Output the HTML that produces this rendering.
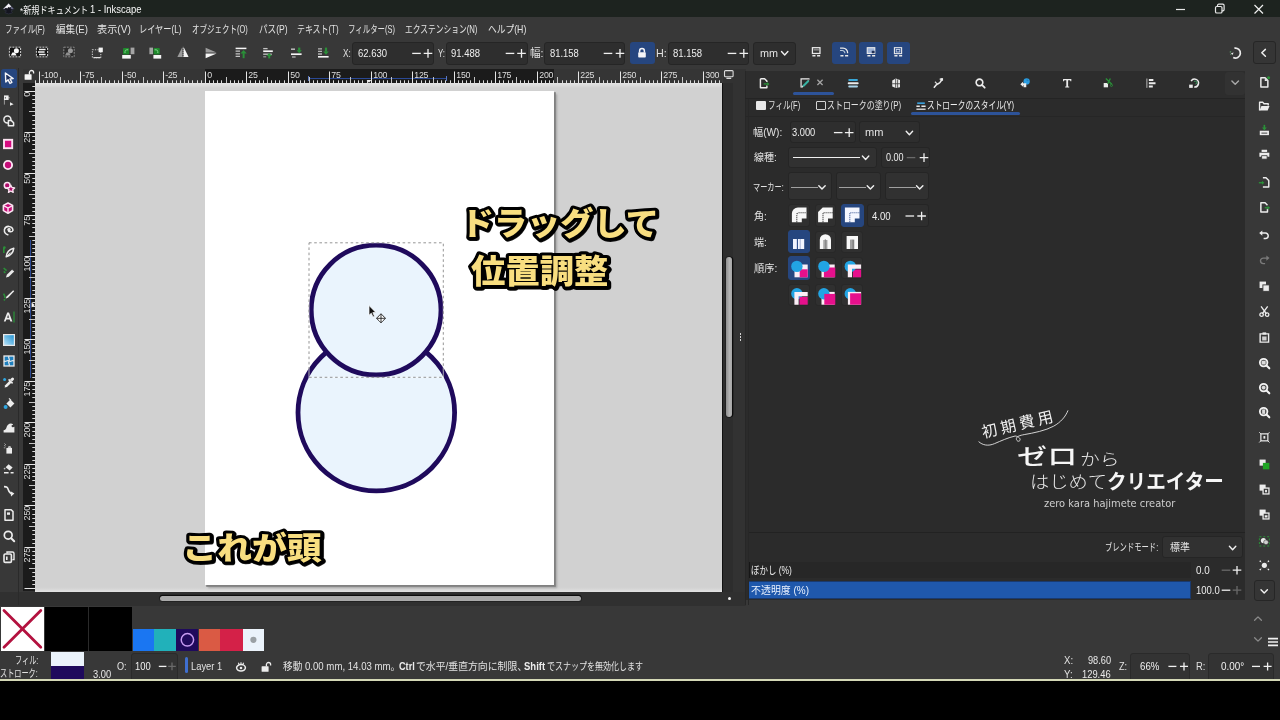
<!DOCTYPE html>
<html lang="ja"><head><meta charset="utf-8"><title>*新規ドキュメント 1 - Inkscape</title>
<style>
*{box-sizing:border-box;margin:0;padding:0}
html,body{width:1280px;height:720px;overflow:hidden;background:#000}
body{font-family:"Liberation Sans","Noto Sans CJK JP",sans-serif;font-size:10.5px;color:#e4e4e4;position:relative;line-height:1}
#root{position:absolute;left:0;top:0;width:1280px;height:720px;will-change:transform;filter:blur(0.6px)}
.a{position:absolute}
.t{position:absolute;white-space:nowrap;transform-origin:0 0}
svg{overflow:visible}

.box{position:absolute;background:#2d2d2d;border:1px solid #232323;border-radius:3px}
.btn{position:absolute;border-radius:3px}
.blue{background:#26467f}
</style></head>
<body>
<div id="root">
<div class="a" style="left:-20px;top:-20px;width:1320px;height:36.8px;background:#1d231f;"></div>
<div class="a" style="left:-20px;top:16.8px;width:1320px;height:664px;background:#383838;"></div>
<div class="a" style="left:0px;top:679.5px;width:1280px;height:2px;background:#d8dcb8;"></div>
<div class="a" style="left:0px;top:681.5px;width:1280px;height:39px;background:#000;"></div>
<span class="t" style="left:19.60px;top:4.00px;transform:scale(0.7389,0.9000);font-size:11px;line-height:15px;height:15px;color:#f6f6f6;">*新規ドキュメント</span>
<span class="t" style="left:89.94px;top:2.41px;transform:scale(0.8610,1.0300);font-size:11px;line-height:15px;height:15px;color:#f6f6f6;">1 - Inkscape</span>
<svg class="a" style="left:1170px;top:0px;" width="100" height="18" viewBox="0 0 100 18"><path d="M6 9.5h9" stroke="#e8e8e8" stroke-width="1.2" fill="none"/><rect x="45.5" y="6.5" width="6.5" height="6.5" rx="1.3" stroke="#e8e8e8" stroke-width="1.2" fill="none"/><path d="M47.5 6.5v-1a1.3 1.3 0 0 1 1.3-1.3h4a1.3 1.3 0 0 1 1.3 1.3v4a1.3 1.3 0 0 1-1.3 1.3h-1" stroke="#e8e8e8" stroke-width="1.2" fill="none"/><path d="M84.5 5l8.5 8.5M93 5l-8.5 8.5" stroke="#f0f0f0" stroke-width="1.2" fill="none"/></svg>
<svg class="a" style="left:2.6px;top:2.6px;" width="12" height="12" viewBox="0 0 12 12"><path d="M5.600 0.400 L10.800 5.600 Q11.300 6.400 10.300 6.800 L8.200 7.600 Q7.600 8 8.300 8.500 L9.200 9.100 Q9.600 9.700 8.800 10 L5.600 10.900 L2.600 10 Q1.800 9.700 2.200 9.100 L3.300 8.300 Q3.700 7.800 3 7.500 L0.900 6.800 Q-0.100 6.400 0.400 5.600 Z" fill="#14151f" stroke="#3a3d52" stroke-width="0.500"/><path d="M5.600 0.500 L8.400 3.400 L6.600 4.600 L5.400 4 L4.200 5.400 L3 4.800 L0.900 6 Q0.300 6 0.600 5.400 Z" fill="#f2f2f6"/><path d="M8.400 3.400 L10.600 5.600 L9 6.400 L7.400 5 Z" fill="#6a6c84"/></svg>
<span class="t" style="left:4.88px;top:22.30px;transform:scaleX(0.7185);font-size:10.5px;line-height:15px;height:15px;color:#e2e2e2;">ファイル(F)</span>
<span class="t" style="left:56.00px;top:22.30px;transform:scaleX(0.9118);font-size:10.5px;line-height:15px;height:15px;color:#e2e2e2;">編集(E)</span>
<span class="t" style="left:97.03px;top:22.30px;transform:scaleX(0.9697);font-size:10.5px;line-height:15px;height:15px;color:#e2e2e2;">表示(V)</span>
<span class="t" style="left:139.44px;top:22.30px;transform:scaleX(0.7788);font-size:10.5px;line-height:15px;height:15px;color:#e2e2e2;">レイヤー(L)</span>
<span class="t" style="left:192.29px;top:22.30px;transform:scaleX(0.7143);font-size:10.5px;line-height:15px;height:15px;color:#e2e2e2;">オブジェクト(O)</span>
<span class="t" style="left:258.68px;top:22.30px;transform:scaleX(0.8182);font-size:10.5px;line-height:15px;height:15px;color:#e2e2e2;">パス(P)</span>
<span class="t" style="left:296.75px;top:22.30px;transform:scaleX(0.7547);font-size:10.5px;line-height:15px;height:15px;color:#e2e2e2;">テキスト(T)</span>
<span class="t" style="left:348.29px;top:22.30px;transform:scaleX(0.7077);font-size:10.5px;line-height:15px;height:15px;color:#e2e2e2;">フィルター(S)</span>
<span class="t" style="left:405.26px;top:22.30px;transform:scaleX(0.7371);font-size:10.5px;line-height:15px;height:15px;color:#e2e2e2;">エクステンション(N)</span>
<span class="t" style="left:488.17px;top:22.30px;transform:scaleX(0.8318);font-size:10.5px;line-height:15px;height:15px;color:#e2e2e2;">ヘルプ(H)</span>
<div class="a" id="canvas" style="left:35px;top:83px;width:687px;height:508.5px;background:#d1d1d1;overflow:hidden"><div class="a" style="left:0;top:0;width:687px;height:5px;background:linear-gradient(#e4e4e4,#d9d9d9 60%,#d1d1d1)"></div><div class="a" style="left:0;bottom:0;width:687px;height:5px;background:linear-gradient(#d1d1d1,#d6d6d6 40%,#e2e2e2)"></div><div class="a" style="left:170.3px;top:8px;width:348.4px;height:494px;background:#fff;box-shadow:1.5px 1.5px 0 0.3px #808080,2.5px 2.5px 2px 0 rgba(120,120,120,.5)"></div></div>
<div class="a" style="left:722px;top:83px;width:1px;height:509px;background:#111;"></div>
<svg class="a" style="left:0;top:0" width="1280" height="720" viewBox="0 0 1280 720"><circle cx="376.3" cy="412.6" r="78.3" fill="#eaf4fd" stroke="#1f0a5c" stroke-width="4.8"/><circle cx="376.1" cy="310.1" r="64.9" fill="#eaf4fd" stroke="#1f0a5c" stroke-width="4.8"/><rect x="309" y="242.8" width="134.3" height="134.5" fill="none" stroke="#fff" stroke-width="1" opacity=".65"/><rect x="309" y="242.8" width="134.3" height="134.5" fill="none" stroke="#7a7a7a" stroke-width="0.8" stroke-dasharray="2.6 2.6"/><path d="M369 305.5 L369 315.2 L371.3 313.2 L373 317 L374.5 316.3 L372.8 312.6 L375.8 312.4 Z" fill="#111" stroke="#fff" stroke-width="0.7"/><g transform="translate(381 318.3)" stroke="#222" stroke-width="0.9" fill="#fff"><path d="M0 -4.6 L2 -2.4 L4.6 0 L2 2.4 L0 4.6 L-2 2.4 L-4.6 0 L-2 -2.4 Z"/><path d="M-4.2 0H4.2M0 -4.2V4.2" fill="none"/></g></svg>
<span class="t" style="left:449.42px;top:194.19px;transform:scale(0.9766,0.9310);font-size:34px;line-height:60px;height:60px;color:#f8de80;"><svg width="234" height="60" viewBox="0 0 234 60" style="display:block;filter:drop-shadow(1.2px 1.4px 0.6px #000)"><text x="12" y="44" font-family="'Noto Sans CJK JP','Liberation Sans',sans-serif" font-size="34" font-weight="900" fill="#f8de80" stroke="#000" stroke-width="6.4" stroke-linejoin="round" stroke-linecap="round" paint-order="stroke">ドラッグして</text></svg></span>
<span class="t" style="left:458.91px;top:241.48px;transform:scale(1.0099,0.9561);font-size:34px;line-height:60px;height:60px;color:#f8de80;"><svg width="166" height="60" viewBox="0 0 166 60" style="display:block;filter:drop-shadow(1.2px 1.4px 0.6px #000)"><text x="12" y="44" font-family="'Noto Sans CJK JP','Liberation Sans',sans-serif" font-size="34" font-weight="900" fill="#f8de80" stroke="#000" stroke-width="6.4" stroke-linejoin="round" stroke-linecap="round" paint-order="stroke">位置調整</text></svg></span>
<span class="t" style="left:170.17px;top:518.90px;transform:scale(1.0252,0.9095);font-size:34px;line-height:60px;height:60px;color:#f8de80;"><svg width="166" height="60" viewBox="0 0 166 60" style="display:block;filter:drop-shadow(1.2px 1.4px 0.6px #000)"><text x="12" y="44" font-family="'Noto Sans CJK JP','Liberation Sans',sans-serif" font-size="34" font-weight="900" fill="#f8de80" stroke="#000" stroke-width="6.4" stroke-linejoin="round" stroke-linecap="round" paint-order="stroke">これが頭</text></svg></span>
<div class="a" style="left:745px;top:71px;width:500px;height:528.5px;background:#2b2b2b;"></div>
<div class="a" style="left:745px;top:71px;width:500px;height:26.5px;background:#2d2d2d;"></div>
<div class="a" style="left:722.5px;top:69px;width:23px;height:537px;background:#323232;"></div>
<div class="a" style="left:723px;top:83px;width:10.4px;height:509px;background:#2d2d2d;"></div>
<div class="a" style="left:726.4px;top:256.5px;width:5.6px;height:160.5px;background:linear-gradient(90deg,#8f8f8f,#b4b4b4 60%,#a4a4a4);border-radius:3px;box-shadow:1px 0 0 0.3px #0c0c0c,0 0 0 1px #222"></div>
<div class="a" style="left:745.2px;top:71px;width:1px;height:534px;background:#272727;"></div>
<div class="a" style="left:748.2px;top:98px;width:1px;height:507px;background:#272727;"></div>
<div class="a" style="left:739.9px;top:333.2px;width:1.4px;height:1.4px;background:#d0d0d0;"></div>
<div class="a" style="left:739.9px;top:336.2px;width:1.4px;height:1.4px;background:#d0d0d0;"></div>
<div class="a" style="left:739.9px;top:339.2px;width:1.4px;height:1.4px;background:#d0d0d0;"></div>
<div class="a" style="left:0px;top:591.5px;width:745px;height:14.5px;background:#303030;"></div>
<div class="a" style="left:160px;top:596px;width:421px;height:5.4px;background:#a9a9a9;border-radius:3px;box-shadow:0 -1px 0 0.3px #0c0c0c,0 0 0 1px #222"></div>
<div class="a" style="left:727.8px;top:597.3px;width:3px;height:3px;background:#f4f4f4;border-radius:50%"></div>
<span class="t" style="left:343.30px;top:45.90px;transform:scaleX(0.7667);font-size:10.8px;line-height:15px;height:15px;color:#e2e2e2;">X:</span>
<div class="a" style="left:352px;top:41.5px;width:82px;height:23.0px;background:#2e2e2e;border:1px solid #252525;border-radius:3px"></div>
<span class="t" style="left:357.50px;top:45.90px;transform:scaleX(0.8788);font-size:10.8px;line-height:15px;height:15px;color:#efefef;">62.630</span>
<svg class="a" style="left:0px;top:0px;" width="1" height="1" viewBox="0 0 1 1"><path d="M412.2 53.4h8.6" stroke="#f0f0f0" stroke-width="1.3" fill="none"/><path d="M423.7 53.4h8.6M428 49.1v8.6" stroke="#f0f0f0" stroke-width="1.3" fill="none"/></svg>
<span class="t" style="left:437.80px;top:45.90px;transform:scaleX(0.7222);font-size:10.8px;line-height:15px;height:15px;color:#e2e2e2;">Y:</span>
<div class="a" style="left:446px;top:41.5px;width:81.5px;height:23.0px;background:#2e2e2e;border:1px solid #252525;border-radius:3px"></div>
<span class="t" style="left:450.80px;top:45.90px;transform:scaleX(0.8788);font-size:10.8px;line-height:15px;height:15px;color:#efefef;">91.488</span>
<svg class="a" style="left:0px;top:0px;" width="1" height="1" viewBox="0 0 1 1"><path d="M505.7 53.4h8.6" stroke="#f0f0f0" stroke-width="1.3" fill="none"/><path d="M517.2 53.4h8.6M521.5 49.1v8.6" stroke="#f0f0f0" stroke-width="1.3" fill="none"/></svg>
<span class="t" style="left:529.82px;top:45.90px;transform:scaleX(0.9833);font-size:10.8px;line-height:15px;height:15px;color:#e2e2e2;">幅:</span>
<div class="a" style="left:544px;top:41.5px;width:81px;height:23.0px;background:#2e2e2e;border:1px solid #252525;border-radius:3px"></div>
<span class="t" style="left:549.50px;top:45.90px;transform:scaleX(0.8727);font-size:10.8px;line-height:15px;height:15px;color:#efefef;">81.158</span>
<svg class="a" style="left:0px;top:0px;" width="1" height="1" viewBox="0 0 1 1"><path d="M603.7 53.4h8.6" stroke="#f0f0f0" stroke-width="1.3" fill="none"/><path d="M615.7 53.4h8.6M620 49.1v8.6" stroke="#f0f0f0" stroke-width="1.3" fill="none"/></svg>
<div class="btn blue" style="left:630px;top:41.5px;width:25px;height:22.5px"></div><svg class="a" style="left:636px;top:47px;" width="12" height="12" viewBox="0 0 12 12"><path d="M3.6 5.6V3.9a2.4 2.4 0 0 1 4.8 0V5.6" stroke="#f4f4f8" stroke-width="1.5" fill="none"/><rect x="2.2" y="5.2" width="7.6" height="5.4" rx="0.8" fill="#f4f4f8"/></svg>
<span class="t" style="left:656.00px;top:45.90px;font-size:10.8px;line-height:15px;height:15px;color:#e2e2e2;">H:</span>
<div class="a" style="left:668px;top:41.5px;width:81.39999999999998px;height:23.0px;background:#2e2e2e;border:1px solid #252525;border-radius:3px"></div>
<span class="t" style="left:672.50px;top:45.90px;transform:scaleX(0.8818);font-size:10.8px;line-height:15px;height:15px;color:#efefef;">81.158</span>
<svg class="a" style="left:0px;top:0px;" width="1" height="1" viewBox="0 0 1 1"><path d="M727.7 53.4h8.6" stroke="#f0f0f0" stroke-width="1.3" fill="none"/><path d="M739.5 53.4h8.6M743.8 49.1v8.6" stroke="#f0f0f0" stroke-width="1.3" fill="none"/></svg>
<div class="a" style="left:752.5px;top:41.5px;width:43.5px;height:23.0px;background:#2e2e2e;border:1px solid #252525;border-radius:3px"></div>
<span class="t" style="left:760.00px;top:45.90px;font-size:10.8px;line-height:15px;height:15px;color:#e2e2e2;">mm</span>
<svg class="a" style="left:0px;top:0px;" width="1" height="1" viewBox="0 0 1 1"><path d="M781.5 51.5l3.2 3.4l3.2 -3.4" stroke="#f0f0f0" stroke-width="1.4" fill="none" stroke-linecap="round" stroke-linejoin="round"/></svg>
<svg class="a" style="left:6.60px;top:44.00px;" width="16.00" height="16.00" viewBox="-8 -8 16 16"><rect x="-5.6" y="-4.8" width="11.2" height="9.6" fill="#141414" stroke="#d0d0d0" stroke-width="1" stroke-dasharray="2 1"/><circle cx="1.4" cy="-1.2" r="2.5" fill="#fafafa"/><path d="M-4.2 3.6l1.600-3h2.600l1.600 3z" fill="#fafafa"/></svg>
<svg class="a" style="left:33.60px;top:44.00px;" width="16.00" height="16.00" viewBox="-8 -8 16 16"><rect x="-5.6" y="-4.8" width="11.2" height="9.6" fill="#141414" stroke="#d0d0d0" stroke-width="1" stroke-dasharray="2 1"/><path d="M-3 -2.4h6.6M-4 0h6.600M-3 2.4h6.6" stroke="#f4f4f4" stroke-width="1.5"/></svg>
<svg class="a" style="left:61.00px;top:44.00px;" width="16.00" height="16.00" viewBox="-8 -8 16 16"><rect x="-5.2" y="-4.8" width="10.4" height="9.6" fill="#2c2c2c" stroke="#8a8a8a" stroke-width="1" stroke-dasharray="2 1"/><circle cx="1.400" cy="-1.200" r="2.500" fill="#9a9a9a"/><path d="M-4 3.600l1.600-3h2.600l1.600 3z" fill="#8f8f8f"/></svg>
<svg class="a" style="left:89.00px;top:44.60px;" width="16.00" height="16.00" viewBox="-8 -8 16 16"><rect x="-4.600" y="-3.200" width="8.400" height="8" fill="none" stroke="#c8c8c8" stroke-width="1.100" stroke-dasharray="1.300 1.200"/><rect x="1.600" y="-5.400" width="4.200" height="4.600" fill="#f4f4f4"/><path d="M-3.400 4.600h7" stroke="#e0e0e0" stroke-width="1.200"/></svg>
<svg class="a" style="left:119.60px;top:44.60px;" width="16.00" height="16.00" viewBox="-8 -8 16 16"><rect x="-5.800" y="2" width="8.600" height="3.600" fill="#f6f6f6"/><rect x="2.600" y="-5.400" width="3.800" height="6.600" fill="#a4a4a4"/><rect x="-5" y="-5" width="6.200" height="6.400" rx="1" fill="#1f8a2c"/><path d="M-3 0v-1.400a1.800 1.800 0 0 1 1.800-1.800h1.400" stroke="#7fd08a" stroke-width="1" fill="none"/></svg>
<svg class="a" style="left:147.40px;top:44.60px;" width="16.00" height="16.00" viewBox="-8 -8 16 16"><rect x="-1.600" y="2" width="7.800" height="3.600" fill="#f6f6f6"/><rect x="-5.600" y="-5.400" width="3.600" height="6.600" fill="#a4a4a4"/><rect x="-1.400" y="-5" width="6.200" height="6.400" rx="1" fill="#1f8a2c"/><path d="M2.800 0v-1.400a1.800 1.800 0 0 0-1.800-1.800h-1.400" stroke="#7fd08a" stroke-width="1" fill="none"/></svg>
<svg class="a" style="left:175.00px;top:44.40px;" width="16.00" height="16.00" viewBox="-8 -8 16 16"><path d="M-0.400 -5.400v10.400h-5.200z" fill="#9c9c9c"/><path d="M0.400 -5.400v10.400h5.200z" fill="#f6f6f6"/><path d="M0 -5v10" stroke="#333" stroke-width="0.800" stroke-dasharray="1 1"/></svg>
<svg class="a" style="left:202.60px;top:45.00px;" width="16.00" height="16.00" viewBox="-8 -8 16 16"><path d="M-5.400 -0.400h11l-11 -4.800z" fill="#9c9c9c"/><path d="M-5.400 0.400h11l-11 4.800z" fill="#f6f6f6"/></svg>
<svg class="a" style="left:232.80px;top:44.80px;" width="16.00" height="16.00" viewBox="-8 -8 16 16"><path d="M-5.400 -4.600h10.800" stroke="#f6f6f6" stroke-width="1.500"/><path d="M-5.400 -1.800h4.400M-5.400 0.800h4.400M-5.400 3.400h4.400" stroke="#c4c4c4" stroke-width="1.300"/><path d="M2.600 5.200v-5" stroke="#2a9038" stroke-width="2"/><path d="M-0.600 0.600l3.200-3.600 3.200 3.600z" fill="#2a9038"/></svg>
<svg class="a" style="left:260.40px;top:44.80px;" width="16.00" height="16.00" viewBox="-8 -8 16 16"><path d="M-4.800 -4.400h4.400" stroke="#c4c4c4" stroke-width="1.300"/><path d="M-4.800 -1.800h9.600" stroke="#f6f6f6" stroke-width="1.700"/><path d="M-4.800 1.200h8.600" stroke="#c4c4c4" stroke-width="1.300"/><path d="M1.200 5.400v-3.200" stroke="#2a9038" stroke-width="2"/><path d="M-1.600 3l2.800-3 2.800 3z" fill="#2a9038"/><path d="M-4.800 3.800h3" stroke="#a0a0a0" stroke-width="1.100"/></svg>
<svg class="a" style="left:287.60px;top:44.80px;" width="16.00" height="16.00" viewBox="-8 -8 16 16"><path d="M-5 -3.800h4" stroke="#b4b4b4" stroke-width="1.600"/><path d="M-5 1.200h10.600" stroke="#f6f6f6" stroke-width="1.700"/><path d="M-4 4h3.600" stroke="#b4b4b4" stroke-width="1.300"/><path d="M3.200 -5.400v3" stroke="#2a9038" stroke-width="2.200"/><path d="M0.600 -2.800l2.600 3 2.600-3z" fill="#2a9038"/></svg>
<svg class="a" style="left:315.00px;top:44.80px;" width="16.00" height="16.00" viewBox="-8 -8 16 16"><path d="M-5 3.800h10.600" stroke="#f6f6f6" stroke-width="1.600"/><path d="M-5 -4.200h4M-5 -1.600h4M-5 1h4" stroke="#b4b4b4" stroke-width="1.300"/><path d="M3 -5.400v4" stroke="#2a9038" stroke-width="2.200"/><path d="M0.200 -1.600l2.800 3.400 2.800-3.400z" fill="#2a9038"/></svg>
<svg class="a" style="left:808.80px;top:45.20px;" width="14.40" height="14.40" viewBox="-8 -8 16 16"><rect x="-4.2" y="-5" width="8.4" height="6.4" fill="none" stroke="#ececec" stroke-width="1.4"/><path d="M-3 -2.6h6" stroke="#a9a9a9" stroke-width="1.2"/><path d="M-4.2 4h3.4M1 4h3.4" stroke="#ececec" stroke-width="1.6"/><path d="M-2.6 4h0.1M2.6 4h0.1" stroke="#234" stroke-width="0.8"/></svg>
<div class="btn blue" style="left:832.0px;top:41.5px;width:23.6px;height:22.4px"></div><svg class="a" style="left:836.60px;top:45.20px;" width="14.40" height="14.40" viewBox="-8 -8 16 16"><path d="M-4.6 -4.4h3.4a5 5 0 0 1 5 5v0.6" stroke="#ececec" stroke-width="1.4" fill="none"/><path d="M-4.6 -1.8h2.4a3 3 0 0 1 3 3" stroke="#bcd" stroke-width="1.2" fill="none"/><path d="M-4.2 4h3.4M1 4h3.4" stroke="#ececec" stroke-width="1.6"/><path d="M-2.6 4h0.1M2.6 4h0.1" stroke="#234" stroke-width="0.8"/></svg>
<div class="btn blue" style="left:859.0px;top:41.5px;width:23.6px;height:22.4px"></div><svg class="a" style="left:863.60px;top:45.20px;" width="14.40" height="14.40" viewBox="-8 -8 16 16"><rect x="-4.4" y="-5" width="8.4" height="6.4" fill="#9fb4d8" stroke="#ececec" stroke-width="1.2"/><rect x="0.6" y="-1.6" width="3.2" height="2.8" fill="#1f2f55"/><path d="M-4.2 4h3.4M1 4h3.4" stroke="#ececec" stroke-width="1.6"/><path d="M-2.6 4h0.1M2.6 4h0.1" stroke="#234" stroke-width="0.8"/></svg>
<div class="btn blue" style="left:886.7px;top:41.5px;width:23.6px;height:22.4px"></div><svg class="a" style="left:891.30px;top:45.20px;" width="14.40" height="14.40" viewBox="-8 -8 16 16"><rect x="-4.2" y="-5" width="8" height="6.6" fill="none" stroke="#ececec" stroke-width="1.2"/><rect x="-2.2" y="-3" width="4" height="2.8" fill="none" stroke="#c8d4ec" stroke-width="1"/><path d="M-4.2 4h3.4M1 4h3.4" stroke="#ececec" stroke-width="1.6"/><path d="M-2.6 4h0.1M2.6 4h0.1" stroke="#234" stroke-width="0.8"/></svg>
<svg class="a" style="left:1227.60px;top:44.60px;" width="16.00" height="16.00" viewBox="-8 -8 16 16"><path d="M-1.6 -4.8a5 5 0 1 1-1.2 9.4" stroke="#ececec" stroke-width="1.7" fill="none"/><path d="M-5.4 -1.8a5 5 0 0 0 0.4 3.4" stroke="#5a8a60" stroke-width="1.4" fill="none" stroke-dasharray="1.4 1.2"/><path d="M-5 0.2l2.6-0.8-1.2 2.6z" fill="#ececec"/></svg>
<div class="a" style="left:1252.5px;top:41px;width:23.09999999999991px;height:23px;background:#353535;border:1px solid #262626;border-radius:3px"></div>
<svg class="a" style="left:0px;top:0px;" width="1" height="1" viewBox="0 0 1 1"><path d="M1265.4 49.4l-3.6 3.4 3.6 3.4" stroke="#f0f0f0" stroke-width="1.5" fill="none" stroke-linecap="round" stroke-linejoin="round"/></svg>
<div class="a" style="left:23px;top:69px;width:699px;height:14px;background:#353535;"></div>
<div class="a" style="left:205.3px;top:69px;width:348.453px;height:14px;background:#1b1b1b;"></div>
<div class="a" style="left:23px;top:83px;width:12px;height:508.5px;background:#353535;"></div>
<div class="a" style="left:23px;top:83px;width:12px;height:508px;background:#1b1b1b;"></div>
<div class="a" style="left:18.2px;top:68px;width:1px;height:537px;background:#2a2a2a;"></div>
<div class="a" style="left:307.6px;top:77.5px;width:139.4px;height:1.4px;background:#2a4894;"></div>
<div class="a" style="left:307.6px;top:75.6px;width:1px;height:5px;background:#5a78c0;"></div>
<div class="a" style="left:446px;top:75.6px;width:1px;height:5px;background:#5a78c0;"></div>
<div class="a" style="left:29.8px;top:240.4px;width:1.4px;height:137.6px;background:#2a4894;"></div>
<svg class="a" style="left:0px;top:0px;" width="1" height="1" viewBox="0 0 1 1"><path d="M39.5 71.5v11.5M80.5 71.5v11.5M122.5 71.5v11.5M163.5 71.5v11.5M205.5 71.5v11.5M246.5 71.5v11.5M288.5 71.5v11.5M329.5 71.5v11.5M371.5 71.5v11.5M412.5 71.5v11.5M454.5 71.5v11.5M495.5 71.5v11.5M537.5 71.5v11.5M578.5 71.5v11.5M620.5 71.5v11.5M661.5 71.5v11.5M703.5 71.5v11.5M24.5 91.5h10.5M24.5 132.5h10.5M24.5 173.5h10.5M24.5 215.5h10.5M24.5 256.5h10.5M24.5 298.5h10.5M24.5 339.5h10.5M24.5 381.5h10.5M24.5 422.5h10.5M24.5 464.5h10.5M24.5 505.5h10.5M24.5 547.5h10.5M24.5 588.5h10.5" stroke="#e6e6e6" stroke-width="1" fill="none"/><path d="M60.5 77v6M101.5 77v6M143.5 77v6M184.5 77v6M226.5 77v6M267.5 77v6M309.5 77v6M350.5 77v6M391.5 77v6M433.5 77v6M474.5 77v6M516.5 77v6M557.5 77v6M599.5 77v6M640.5 77v6M682.5 77v6M29 111.5h6M29 153.5h6M29 194.5h6M29 236.5h6M29 277.5h6M29 319.5h6M29 360.5h6M29 402.5h6M29 443.5h6M29 485.5h6M29 526.5h6M29 568.5h6" stroke="#c4c4c4" stroke-width="1" fill="none"/><path d="M35.5 80.3v2.7M43.5 80.3v2.7M47.5 80.3v2.7M51.5 80.3v2.7M55.5 80.3v2.7M64.5 80.3v2.7M68.5 80.3v2.7M72.5 80.3v2.7M76.5 80.3v2.7M85.5 80.3v2.7M89.5 80.3v2.7M93.5 80.3v2.7M97.5 80.3v2.7M105.5 80.3v2.7M109.5 80.3v2.7M114.5 80.3v2.7M118.5 80.3v2.7M126.5 80.3v2.7M130.5 80.3v2.7M134.5 80.3v2.7M138.5 80.3v2.7M147.5 80.3v2.7M151.5 80.3v2.7M155.5 80.3v2.7M159.5 80.3v2.7M167.5 80.3v2.7M172.5 80.3v2.7M176.5 80.3v2.7M180.5 80.3v2.7M188.5 80.3v2.7M192.5 80.3v2.7M197.5 80.3v2.7M201.5 80.3v2.7M209.5 80.3v2.7M213.5 80.3v2.7M217.5 80.3v2.7M221.5 80.3v2.7M230.5 80.3v2.7M234.5 80.3v2.7M238.5 80.3v2.7M242.5 80.3v2.7M250.5 80.3v2.7M255.5 80.3v2.7M259.5 80.3v2.7M263.5 80.3v2.7M271.5 80.3v2.7M275.5 80.3v2.7M279.5 80.3v2.7M284.5 80.3v2.7M292.5 80.3v2.7M296.5 80.3v2.7M300.5 80.3v2.7M304.5 80.3v2.7M313.5 80.3v2.7M317.5 80.3v2.7M321.5 80.3v2.7M325.5 80.3v2.7M333.5 80.3v2.7M338.5 80.3v2.7M342.5 80.3v2.7M346.5 80.3v2.7M354.5 80.3v2.7M358.5 80.3v2.7M362.5 80.3v2.7M367.5 80.3v2.7M375.5 80.3v2.7M379.5 80.3v2.7M383.5 80.3v2.7M387.5 80.3v2.7M396.5 80.3v2.7M400.5 80.3v2.7M404.5 80.3v2.7M408.5 80.3v2.7M416.5 80.3v2.7M421.5 80.3v2.7M425.5 80.3v2.7M429.5 80.3v2.7M437.5 80.3v2.7M441.5 80.3v2.7M445.5 80.3v2.7M450.5 80.3v2.7M458.5 80.3v2.7M462.5 80.3v2.7M466.5 80.3v2.7M470.5 80.3v2.7M479.5 80.3v2.7M483.5 80.3v2.7M487.5 80.3v2.7M491.5 80.3v2.7M499.5 80.3v2.7M503.5 80.3v2.7M508.5 80.3v2.7M512.5 80.3v2.7M520.5 80.3v2.7M524.5 80.3v2.7M528.5 80.3v2.7M533.5 80.3v2.7M541.5 80.3v2.7M545.5 80.3v2.7M549.5 80.3v2.7M553.5 80.3v2.7M562.5 80.3v2.7M566.5 80.3v2.7M570.5 80.3v2.7M574.5 80.3v2.7M582.5 80.3v2.7M586.5 80.3v2.7M591.5 80.3v2.7M595.5 80.3v2.7M603.5 80.3v2.7M607.5 80.3v2.7M611.5 80.3v2.7M615.5 80.3v2.7M624.5 80.3v2.7M628.5 80.3v2.7M632.5 80.3v2.7M636.5 80.3v2.7M645.5 80.3v2.7M649.5 80.3v2.7M653.5 80.3v2.7M657.5 80.3v2.7M665.5 80.3v2.7M669.5 80.3v2.7M674.5 80.3v2.7M678.5 80.3v2.7M686.5 80.3v2.7M690.5 80.3v2.7M694.5 80.3v2.7M698.5 80.3v2.7M707.5 80.3v2.7M711.5 80.3v2.7M715.5 80.3v2.7M719.5 80.3v2.7M32.3 86.5h2.7M32.3 95.5h2.7M32.3 99.5h2.7M32.3 103.5h2.7M32.3 107.5h2.7M32.3 115.5h2.7M32.3 120.5h2.7M32.3 124.5h2.7M32.3 128.5h2.7M32.3 136.5h2.7M32.3 140.5h2.7M32.3 144.5h2.7M32.3 149.5h2.7M32.3 157.5h2.7M32.3 161.5h2.7M32.3 165.5h2.7M32.3 169.5h2.7M32.3 178.5h2.7M32.3 182.5h2.7M32.3 186.5h2.7M32.3 190.5h2.7M32.3 198.5h2.7M32.3 203.5h2.7M32.3 207.5h2.7M32.3 211.5h2.7M32.3 219.5h2.7M32.3 223.5h2.7M32.3 227.5h2.7M32.3 232.5h2.7M32.3 240.5h2.7M32.3 244.5h2.7M32.3 248.5h2.7M32.3 252.5h2.7M32.3 261.5h2.7M32.3 265.5h2.7M32.3 269.5h2.7M32.3 273.5h2.7M32.3 281.5h2.7M32.3 285.5h2.7M32.3 290.5h2.7M32.3 294.5h2.7M32.3 302.5h2.7M32.3 306.5h2.7M32.3 310.5h2.7M32.3 315.5h2.7M32.3 323.5h2.7M32.3 327.5h2.7M32.3 331.5h2.7M32.3 335.5h2.7M32.3 344.5h2.7M32.3 348.5h2.7M32.3 352.5h2.7M32.3 356.5h2.7M32.3 364.5h2.7M32.3 368.5h2.7M32.3 373.5h2.7M32.3 377.5h2.7M32.3 385.5h2.7M32.3 389.5h2.7M32.3 393.5h2.7M32.3 397.5h2.7M32.3 406.5h2.7M32.3 410.5h2.7M32.3 414.5h2.7M32.3 418.5h2.7M32.3 427.5h2.7M32.3 431.5h2.7M32.3 435.5h2.7M32.3 439.5h2.7M32.3 447.5h2.7M32.3 451.5h2.7M32.3 456.5h2.7M32.3 460.5h2.7M32.3 468.5h2.7M32.3 472.5h2.7M32.3 476.5h2.7M32.3 480.5h2.7M32.3 489.5h2.7M32.3 493.5h2.7M32.3 497.5h2.7M32.3 501.5h2.7M32.3 509.5h2.7M32.3 514.5h2.7M32.3 518.5h2.7M32.3 522.5h2.7M32.3 530.5h2.7M32.3 534.5h2.7M32.3 539.5h2.7M32.3 543.5h2.7M32.3 551.5h2.7M32.3 555.5h2.7M32.3 559.5h2.7M32.3 563.5h2.7M32.3 572.5h2.7M32.3 576.5h2.7M32.3 580.5h2.7M32.3 584.5h2.7" stroke="#dcdcdc" stroke-width="1" fill="none"/><path d="M366.6 80l2.4 2.8 2.4-2.8z" fill="#f0f0f0"/><path d="M31.600 302.400l3.200 2.600-3.200 2.600z" fill="#f4f4f4"/></svg>
<span class="t" style="left:41.20px;top:70.40px;font-size:8.8px;line-height:10px;height:10px;color:#dedede;letter-spacing:-0.2px;">-100</span>
<span class="t" style="left:82.20px;top:70.40px;font-size:8.8px;line-height:10px;height:10px;color:#dedede;letter-spacing:-0.2px;">-75</span>
<span class="t" style="left:124.20px;top:70.40px;font-size:8.8px;line-height:10px;height:10px;color:#dedede;letter-spacing:-0.2px;">-50</span>
<span class="t" style="left:165.20px;top:70.40px;font-size:8.8px;line-height:10px;height:10px;color:#dedede;letter-spacing:-0.2px;">-25</span>
<span class="t" style="left:207.20px;top:70.40px;font-size:8.8px;line-height:10px;height:10px;color:#dedede;letter-spacing:-0.2px;">0</span>
<span class="t" style="left:248.20px;top:70.40px;font-size:8.8px;line-height:10px;height:10px;color:#dedede;letter-spacing:-0.2px;">25</span>
<span class="t" style="left:290.20px;top:70.40px;font-size:8.8px;line-height:10px;height:10px;color:#dedede;letter-spacing:-0.2px;">50</span>
<span class="t" style="left:331.20px;top:70.40px;font-size:8.8px;line-height:10px;height:10px;color:#dedede;letter-spacing:-0.2px;">75</span>
<span class="t" style="left:373.20px;top:70.40px;font-size:8.8px;line-height:10px;height:10px;color:#dedede;letter-spacing:-0.2px;">100</span>
<span class="t" style="left:414.20px;top:70.40px;font-size:8.8px;line-height:10px;height:10px;color:#dedede;letter-spacing:-0.2px;">125</span>
<span class="t" style="left:456.20px;top:70.40px;font-size:8.8px;line-height:10px;height:10px;color:#dedede;letter-spacing:-0.2px;">150</span>
<span class="t" style="left:497.20px;top:70.40px;font-size:8.8px;line-height:10px;height:10px;color:#dedede;letter-spacing:-0.2px;">175</span>
<span class="t" style="left:539.20px;top:70.40px;font-size:8.8px;line-height:10px;height:10px;color:#dedede;letter-spacing:-0.2px;">200</span>
<span class="t" style="left:580.20px;top:70.40px;font-size:8.8px;line-height:10px;height:10px;color:#dedede;letter-spacing:-0.2px;">225</span>
<span class="t" style="left:622.20px;top:70.40px;font-size:8.8px;line-height:10px;height:10px;color:#dedede;letter-spacing:-0.2px;">250</span>
<span class="t" style="left:663.20px;top:70.40px;font-size:8.8px;line-height:10px;height:10px;color:#dedede;letter-spacing:-0.2px;">275</span>
<span class="t" style="left:705.20px;top:70.40px;font-size:8.8px;line-height:10px;height:10px;color:#dedede;letter-spacing:-0.2px;">300</span>
<span class="a" style="left:22.4px;top:91.7px;height:10px;white-space:nowrap;font-size:9px;line-height:10px;color:#dedede;letter-spacing:-0.2px;transform-origin:0 0;transform:rotate(-90deg) translate(-100%,0)">0</span>
<span class="a" style="left:22.4px;top:132.7px;height:10px;white-space:nowrap;font-size:9px;line-height:10px;color:#dedede;letter-spacing:-0.2px;transform-origin:0 0;transform:rotate(-90deg) translate(-100%,0)">25</span>
<span class="a" style="left:22.4px;top:173.7px;height:10px;white-space:nowrap;font-size:9px;line-height:10px;color:#dedede;letter-spacing:-0.2px;transform-origin:0 0;transform:rotate(-90deg) translate(-100%,0)">50</span>
<span class="a" style="left:22.4px;top:215.7px;height:10px;white-space:nowrap;font-size:9px;line-height:10px;color:#dedede;letter-spacing:-0.2px;transform-origin:0 0;transform:rotate(-90deg) translate(-100%,0)">75</span>
<span class="a" style="left:22.4px;top:256.7px;height:10px;white-space:nowrap;font-size:9px;line-height:10px;color:#dedede;letter-spacing:-0.2px;transform-origin:0 0;transform:rotate(-90deg) translate(-100%,0)">100</span>
<span class="a" style="left:22.4px;top:298.7px;height:10px;white-space:nowrap;font-size:9px;line-height:10px;color:#dedede;letter-spacing:-0.2px;transform-origin:0 0;transform:rotate(-90deg) translate(-100%,0)">125</span>
<span class="a" style="left:22.4px;top:339.7px;height:10px;white-space:nowrap;font-size:9px;line-height:10px;color:#dedede;letter-spacing:-0.2px;transform-origin:0 0;transform:rotate(-90deg) translate(-100%,0)">150</span>
<span class="a" style="left:22.4px;top:381.7px;height:10px;white-space:nowrap;font-size:9px;line-height:10px;color:#dedede;letter-spacing:-0.2px;transform-origin:0 0;transform:rotate(-90deg) translate(-100%,0)">175</span>
<span class="a" style="left:22.4px;top:422.7px;height:10px;white-space:nowrap;font-size:9px;line-height:10px;color:#dedede;letter-spacing:-0.2px;transform-origin:0 0;transform:rotate(-90deg) translate(-100%,0)">200</span>
<span class="a" style="left:22.4px;top:464.7px;height:10px;white-space:nowrap;font-size:9px;line-height:10px;color:#dedede;letter-spacing:-0.2px;transform-origin:0 0;transform:rotate(-90deg) translate(-100%,0)">225</span>
<span class="a" style="left:22.4px;top:505.7px;height:10px;white-space:nowrap;font-size:9px;line-height:10px;color:#dedede;letter-spacing:-0.2px;transform-origin:0 0;transform:rotate(-90deg) translate(-100%,0)">250</span>
<span class="a" style="left:22.4px;top:547.7px;height:10px;white-space:nowrap;font-size:9px;line-height:10px;color:#dedede;letter-spacing:-0.2px;transform-origin:0 0;transform:rotate(-90deg) translate(-100%,0)">275</span>
<svg class="a" style="left:23px;top:69px;" width="12" height="13" viewBox="0 0 12 13"><path d="M6.4 5.6V3.6a2.1 2.1 0 0 1 4.2 0V4.6" stroke="#f0f0f0" stroke-width="1.3" fill="none"/><rect x="1.6" y="5.2" width="7" height="5.6" rx="0.6" fill="#f4f4f4"/></svg>
<svg class="a" style="left:723px;top:69px;" width="12" height="12" viewBox="0 0 12 12"><rect x="1.500" y="1.600" width="8.600" height="6.200" rx="1" fill="#3c3c3c" stroke="#dcdcdc" stroke-width="1.100"/><path d="M3.400 9.300h4.800" stroke="#e4e4e4" stroke-width="1.300"/></svg>
<div class="a" style="left:0.6px;top:68.5px;width:16px;height:19.8px;background:#26467f;border-radius:2.5px"></div>
<svg class="a" style="left:0.60px;top:70.30px;" width="16.00" height="16.00" viewBox="-8 -8 16 16"><path d="M-3.6 -5l0.4 9 2.3-2.2 1.9 3.6 1.9-1-1.9-3.5 3.2-0.3z" fill="#1b2d5c" stroke="#f4f4f8" stroke-width="1.4" stroke-linejoin="round"/></svg>
<svg class="a" style="left:0.60px;top:91.70px;" width="16.00" height="16.00" viewBox="-8 -8 16 16"><path d="M-4.6 4.6v-6.8h5.6" stroke="#9a9a9a" stroke-width="1" fill="none"/><rect x="-5" y="-4.6" width="4.6" height="4.6" fill="#ececec"/><path d="M1 2.2l3.6 2-3.6 1.6z" fill="#ececec"/><path d="M-3.6 -3v1.6" stroke="#444" stroke-width="0.8"/></svg>
<svg class="a" style="left:0.60px;top:112.80px;" width="16.00" height="16.00" viewBox="-8 -8 16 16"><circle cx="-1.6" cy="-1.4" r="3.5" fill="none" stroke="#ececec" stroke-width="1.5"/><path d="M-0.6 -0.4h3l2.2 2.2v3h-5.2z" fill="#3a3a3a" stroke="#ececec" stroke-width="1.5" stroke-linejoin="round"/></svg>
<svg class="a" style="left:0.40px;top:135.60px;" width="16.00" height="16.00" viewBox="-8 -8 16 16"><rect x="-4" y="-4.200" width="8.200" height="8.400" fill="#d60a80" stroke="#fbe3f1" stroke-width="1.900"/></svg>
<svg class="a" style="left:0.40px;top:157.40px;" width="16.00" height="16.00" viewBox="-8 -8 16 16"><circle cx="0" cy="0" r="4.100" fill="#c50c78" stroke="#fbe3f1" stroke-width="1.900"/></svg>
<svg class="a" style="left:0.60px;top:179.00px;" width="16.00" height="16.00" viewBox="-8 -8 16 16"><circle cx="-1.800" cy="-1.600" r="2.900" fill="#b00c6c" stroke="#fbe3f1" stroke-width="1.500"/><path d="M1.800 -1.800l1.200 2.300 2.600 0.400-1.900 1.800 0.500 2.600-2.400-1.300-2.300 1.300 0.500-2.600-1.900-1.800 2.600-0.400z" fill="#b00c6c" stroke="#fbe3f1" stroke-width="1.400" stroke-linejoin="round"/></svg>
<svg class="a" style="left:0.40px;top:200.40px;" width="16.00" height="16.00" viewBox="-8 -8 16 16"><path d="M0 -5l4.600 2.400v5.200l-4.600 2.600-4.600-2.600v-5.200z" fill="#c50c78" stroke="#fbe3f1" stroke-width="1.600" stroke-linejoin="round"/><path d="M-4.400 -2.400l4.400 2.400 4.400-2.400M0 0v4.800" stroke="#fbe3f1" stroke-width="1.400" fill="none"/></svg>
<svg class="a" style="left:0.60px;top:221.80px;" width="16.00" height="16.00" viewBox="-8 -8 16 16"><path d="M0.4 0.6a1 1 0 1 0-1.4-1a2.6 2.6 0 0 0 5 0.6a4.4 4.4 0 0 0-8.6-0.6a5 5 0 0 0 3.4 5.2" stroke="#ececec" stroke-width="1.5" fill="none" stroke-linecap="round"/></svg>
<svg class="a" style="left:0.60px;top:244.40px;" width="16.00" height="16.00" viewBox="-8 -8 16 16"><path d="M-5.2 -4.2v5.2" stroke="#2a9038" stroke-width="1.6"/><circle cx="-4.6" cy="-4.4" r="1.3" fill="#2a9038"/><path d="M-2.8 4.8c0.4-4.6 3-7.6 7.6-8.6c-0.6 4.8-3.2 7.4-7.6 8.6z" fill="none" stroke="#ececec" stroke-width="1.5" stroke-linejoin="round"/><path d="M-2.4 4.4l3.6-3.8" stroke="#ececec" stroke-width="1"/></svg>
<svg class="a" style="left:0.60px;top:265.20px;" width="16.00" height="16.00" viewBox="-8 -8 16 16"><path d="M-5.4 -5l3 2.6M-5.2 -1.6l1.6 1.6" stroke="#2a9038" stroke-width="1.5"/><path d="M-3 4.6l0.8-2.8 5.4-5.4 2 2-5.4 5.4z" fill="#ececec"/><path d="M2.6 -4.2l2.2 2.2" stroke="#555" stroke-width="0.8"/></svg>
<svg class="a" style="left:0.60px;top:286.80px;" width="16.00" height="16.00" viewBox="-8 -8 16 16"><path d="M-5.4 -1.4c1 1.6 1.6 3 1.4 4.6" stroke="#2a9038" stroke-width="1.6" fill="none"/><path d="M-3.4 3.6l1-2.2 6.6-6.2 1 1-6.2 6.6z" fill="#ececec"/><path d="M-3.8 4.2l-1.4 1.2" stroke="#2a9038" stroke-width="1.4"/></svg>
<svg class="a" style="left:0.80px;top:309.00px;" width="16.00" height="16.00" viewBox="-8 -8 16 16"><path d="M-5.2 4.6l3.4-9h1.8l3.4 9h-2l-0.8-2.2h-3.2l-0.8 2.2zM-1.9 0.8h2l-1-3z" fill="#ececec"/><path d="M5 -5.4v11" stroke="#2a9038" stroke-width="1.3"/></svg>
<svg class="a" style="left:3px;top:334px;" width="12" height="12" viewBox="0 0 12 12"><defs><linearGradient id="gr1" x1="1" y1="0" x2="0" y2="1"><stop offset="0" stop-color="#1b8fd0"/><stop offset="1" stop-color="#bfe6fa"/></linearGradient></defs><rect x="0.6" y="0.6" width="10.8" height="10.8" fill="url(#gr1)" stroke="#e8e8e8" stroke-width="1.2"/></svg>
<svg class="a" style="left:0.60px;top:353.20px;" width="16.00" height="16.00" viewBox="-8 -8 16 16"><rect x="-5" y="-5" width="10" height="10" fill="#1e7fbd" stroke="#ececec" stroke-width="1.3"/><path d="M-5 0c2 1.4 3 -1.4 5 0s3 -1.4 5 0M0 -5c-1.4 2 1.4 3 0 5s1.4 3 0 5" stroke="#ececec" stroke-width="1.2" fill="none"/></svg>
<svg class="a" style="left:0.60px;top:374.80px;" width="16.00" height="16.00" viewBox="-8 -8 16 16"><circle cx="-4.4" cy="-3.6" r="1.5" fill="#2fa6e0"/><path d="M-4.4 4.6l0.6-2.4 4.6-4.6 1.8 1.8-4.6 4.6z" fill="#ececec"/><path d="M1 -3.4l1.6-1.6a1.4 1.4 0 0 1 2 2l-1.6 1.6z" fill="#ececec"/><path d="M-0.4 -3.6l4 4" stroke="#ececec" stroke-width="1.5"/></svg>
<svg class="a" style="left:0.60px;top:396.40px;" width="16.00" height="16.00" viewBox="-8 -8 16 16"><circle cx="-3.4" cy="3" r="2" fill="#2fa6e0"/><path d="M-2.6 -0.4l4-4 4 4-4 4z" fill="#ececec"/><path d="M0 -5.6l2 2" stroke="#ececec" stroke-width="1.3"/></svg>
<svg class="a" style="left:0.60px;top:419.60px;" width="16.00" height="16.00" viewBox="-8 -8 16 16"><path d="M-5.4 4.6v-2.4c1.4 0 2.4-0.8 2.8-2.4c0.6-2.6 2.2-4.2 4.6-4.2c1.4 0 2.2 0.8 2 1.6c-0.6-0.4-1.6 0-1.4 1c0.2 1 1.6 1.4 2.8 0.6v5.8z" fill="#ececec"/></svg>
<svg class="a" style="left:0.60px;top:440.60px;" width="16.00" height="16.00" viewBox="-8 -8 16 16"><path d="M-2.6 -1h5.6v5.6h-5.6z" fill="#ececec"/><path d="M-1.4 -1l1-2h1.8l1 2z" fill="#bdbdbd"/><path d="M-5 -3.6l1.6 0.8M-5.2 -1.2h1.6M-4.6 -5.6l1.6 1.6" stroke="#9a9a9a" stroke-width="1"/></svg>
<svg class="a" style="left:0.60px;top:461.40px;" width="16.00" height="16.00" viewBox="-8 -8 16 16"><path d="M-0.4 -4.8l4 3.4-3 3-4-3.4z" fill="#ececec"/><path d="M-5 3.8h4.6M1.6 3.8h3" stroke="#ececec" stroke-width="1.5"/><circle cx="-4.4" cy="-0.4" r="0.9" fill="#bbb"/></svg>
<svg class="a" style="left:0.60px;top:482.60px;" width="16.00" height="16.00" viewBox="-8 -8 16 16"><path d="M-5 -4.4c3.4 0 3.6 1 4.4 3.4s1.6 3.6 3.8 3.6" stroke="#ececec" stroke-width="1.6" fill="none"/><path d="M1.6 0.2l3.8 2.4-3.4 2.8z" fill="#ececec"/></svg>
<svg class="a" style="left:0.60px;top:506.60px;" width="16.00" height="16.00" viewBox="-8 -8 16 16"><path d="M-4 -5.2h6.2l1.8 1.8v8.6h-8z" fill="none" stroke="#ececec" stroke-width="1.5" stroke-linejoin="round"/><path d="M-2 -2.6h3v2.4h-3z" fill="#ececec"/></svg>
<svg class="a" style="left:0.60px;top:528.20px;" width="16.00" height="16.00" viewBox="-8 -8 16 16"><circle cx="-0.8" cy="-0.8" r="3.9" fill="none" stroke="#ececec" stroke-width="1.7"/><path d="M2.2 2.2l3 3" stroke="#ececec" stroke-width="2" stroke-linecap="round"/></svg>
<svg class="a" style="left:0.60px;top:549.40px;" width="16.00" height="16.00" viewBox="-8 -8 16 16"><path d="M-2 -3.6v-1.4h5.4a1.6 1.6 0 0 1 1.6 1.6v6h-1.6" fill="none" stroke="#ececec" stroke-width="1.4"/><rect x="-5" y="-3" width="7.4" height="8.4" rx="1.2" fill="none" stroke="#ececec" stroke-width="1.6"/><path d="M-3 -0.6h1.6v3.6h-1.6z" fill="#ececec"/></svg>
<div class="a" style="left:792.5px;top:92.2px;width:41.3px;height:3.2px;background:#2d5399;border-radius:1.5px"></div>
<svg class="a" style="left:756.80px;top:75.60px;" width="14.40" height="14.40" viewBox="-8 -8 16 16"><path d="M-4.2 -5h4.6l2.6 2.6v1M3 2.6v2.4h-7.2v-10" fill="none" stroke="#ececec" stroke-width="1.6" stroke-linejoin="round"/><path d="M-0.6 0.8h4.4" stroke="#2a9038" stroke-width="1.5"/><path d="M3.2 -1.4l2.6 2.2-2.6 2.2z" fill="#2a9038"/></svg>
<svg class="a" style="left:798.40px;top:75.60px;" width="14.40" height="14.40" viewBox="-8 -8 16 16"><path d="M-4.6 4.8v-9.6h9.4" fill="none" stroke="#ececec" stroke-width="1.3"/><path d="M4.6 -3.6l-8 8" stroke="#b8b8b8" stroke-width="1"/><path d="M-3.6 4.6l1-2.6 5.6-5.6 1.6 1.6-5.6 5.6z" fill="#37b3a3"/><path d="M-3.8 4.8l0.8-2" stroke="#eee" stroke-width="1.2"/></svg>
<svg class="a" style="left:0px;top:0px;" width="1" height="1" viewBox="0 0 1 1"><path d="M817.4 79.8l5.2 5.2M822.6 79.8l-5.2 5.2" stroke="#a4a4a4" stroke-width="1.3" fill="none"/></svg>
<svg class="a" style="left:846.40px;top:75.60px;" width="14.40" height="14.40" viewBox="-8 -8 16 16"><path d="M-4.4 -3.6h8.6" stroke="#39a7d8" stroke-width="2.2" stroke-linecap="round"/><path d="M-5 0h10" stroke="#ececec" stroke-width="2.2" stroke-linecap="round"/><path d="M-4.4 3.8h8.6" stroke="#a9d4ea" stroke-width="2.2" stroke-linecap="round"/></svg>
<svg class="a" style="left:888.60px;top:75.60px;" width="14.40" height="14.40" viewBox="-8 -8 16 16"><path d="M-4.4 -3l4-2.2 4.6 1.6v8l-4.6 1-4-1.6z" fill="#ececec"/><path d="M-0.6 -5v10.2M-4.4 0.6h8.6M1.6 -4.2v9.4" stroke="#3a3a3a" stroke-width="0.9" fill="none"/></svg>
<svg class="a" style="left:930.80px;top:75.60px;" width="14.40" height="14.40" viewBox="-8 -8 16 16"><path d="M-4.800 5l3-3.600 3.400-1.800 3-4" stroke="#ececec" stroke-width="1.700" fill="none" stroke-linejoin="round"/><path d="M-3.600 -1.600l3.400 3.400M1.600 -4.600l3.600 0.400" stroke="#d8d8d8" stroke-width="1.300"/><rect x="2.600" y="-5.600" width="2.800" height="2.800" fill="#ececec"/></svg>
<svg class="a" style="left:973.40px;top:75.60px;" width="14.40" height="14.40" viewBox="-8 -8 16 16"><circle cx="-0.8" cy="-0.8" r="3.7" fill="none" stroke="#ececec" stroke-width="1.8"/><path d="M2.2 2.2l2.8 2.8" stroke="#ececec" stroke-width="2" stroke-linecap="round"/></svg>
<svg class="a" style="left:1017.80px;top:75.60px;" width="14.40" height="14.40" viewBox="-8 -8 16 16"><circle cx="1.6" cy="-2" r="3.5" fill="#2a9ce0"/><path d="M-5.4 1.2l3-2.8v1.6h3.6v4.4h-3v-2h-0.6v1.6z" fill="#ececec"/><path d="M1.4 -3.4c1-0.6 2 0.2 1.6 1.2" stroke="#1b6da8" stroke-width="0.9" fill="none"/></svg>
<svg class="a" style="left:1059.80px;top:75.60px;" width="14.40" height="14.40" viewBox="-8 -8 16 16"><path d="M-4.6 -4.6h9.2v2.4h-1l-0.4-1h-2.2v7h1.2v1h-4.4v-1h1.2v-7h-2.2l-0.4 1h-1z" fill="#ececec"/></svg>
<svg class="a" style="left:1101.20px;top:75.60px;" width="14.40" height="14.40" viewBox="-8 -8 16 16"><rect x="-5" y="-0.2" width="4.8" height="4.8" fill="#ececec"/><path d="M-2.6 -5.2l6.6 6.4M2.4 -5.2l-3 6" stroke="#2a9038" stroke-width="1.5" fill="none"/><circle cx="3.6" cy="2.4" r="1.2" fill="none" stroke="#2a9038" stroke-width="1"/></svg>
<svg class="a" style="left:1144.40px;top:75.60px;" width="14.40" height="14.40" viewBox="-8 -8 16 16"><path d="M-4.8 -5.2v10.4" stroke="#c8c8c8" stroke-width="1"/><path d="M-2.6 -3.6h5M-2.6 0h7.4M-2.6 3.6h4.4" stroke="#ececec" stroke-width="2.2"/></svg>
<svg class="a" style="left:1187.40px;top:75.60px;" width="14.40" height="14.40" viewBox="-8 -8 16 16"><path d="M-3.4 -2.4a4.4 4.4 0 1 1 3.4 6.6" stroke="#ececec" stroke-width="1.7" fill="none"/><rect x="-5.6" y="1.6" width="4" height="3.6" fill="#ececec"/><path d="M0 -1.6a1.6 1.6 0 1 1 1.2 2.4" stroke="#3c8c5a" stroke-width="1.2" fill="none"/></svg>
<div class="a" style="left:1225px;top:72px;width:20px;height:23px;background:#323232;border-radius:3px"></div>
<svg class="a" style="left:0px;top:0px;" width="1" height="1" viewBox="0 0 1 1"><path d="M1231.9 80.89999999999999l3.3 3.4l3.3 -3.4" stroke="#a8a8a8" stroke-width="1.4" fill="none" stroke-linecap="round" stroke-linejoin="round"/></svg>
<div class="a" style="left:745px;top:97.5px;width:500px;height:1px;background:#242424;"></div>
<div class="a" style="left:756.2px;top:100.8px;width:9.4px;height:9.4px;background:#e8e8e8;border-radius:1px"></div>
<span class="t" style="left:768.28px;top:98.40px;transform:scaleX(0.7209);font-size:10.5px;line-height:15px;height:15px;color:#e2e2e2;">フィル(F)</span>
<div class="a" style="left:816.2px;top:100.8px;width:9.4px;height:9.4px;border:1.4px solid #d4d4d4;border-radius:1px"></div><span class="t" style="left:827.24px;top:98.40px;transform:scaleX(0.7563);font-size:10.5px;line-height:15px;height:15px;color:#e2e2e2;">ストロークの塗り(P)</span>
<svg class="a" style="left:915.6px;top:100.6px;" width="10" height="10" viewBox="0 0 10 10"><path d="M1.200 2.200h7.600" stroke="#3a9fdb" stroke-width="1.700"/><path d="M0.400 5.200h3.400M5.400 5.200h4.200" stroke="#e8e8e8" stroke-width="1.500"/><path d="M0.400 8.200h9.200" stroke="#e8e8e8" stroke-width="1.300"/></svg>
<span class="t" style="left:927.27px;top:98.40px;transform:scaleX(0.7316);font-size:10.5px;line-height:15px;height:15px;color:#f0f0f0;">ストロークのスタイル(Y)</span>
<div class="a" style="left:911px;top:112.4px;width:109px;height:3px;background:#2d5399;border-radius:1.5px"></div>
<div class="a" style="left:745px;top:116px;width:500px;height:1px;background:#262626;"></div>
<span class="t" style="left:753.03px;top:124.90px;transform:scaleX(0.9655);font-size:10.5px;line-height:15px;height:15px;color:#e2e2e2;">幅(W):</span>
<div class="a" style="left:790px;top:121px;width:65.60000000000002px;height:22.400000000000006px;background:#2e2e2e;border:1px solid #252525;border-radius:3px"></div>
<span class="t" style="left:792.40px;top:125.10px;transform:scaleX(0.8593);font-size:10.8px;line-height:15px;height:15px;color:#efefef;">3.000</span>
<svg class="a" style="left:0px;top:0px;" width="1" height="1" viewBox="0 0 1 1"><path d="M833.9000000000001 132.6h8.6" stroke="#f0f0f0" stroke-width="1.3" fill="none"/><path d="M844.9000000000001 132.6h8.6M849.2 128.29999999999998v8.6" stroke="#f0f0f0" stroke-width="1.3" fill="none"/></svg>
<div class="a" style="left:858.8px;top:121px;width:60.80000000000007px;height:22.400000000000006px;background:#2e2e2e;border:1px solid #252525;border-radius:3px"></div>
<span class="t" style="left:864.58px;top:125.10px;transform:scaleX(1.0250);font-size:10.8px;line-height:15px;height:15px;color:#e2e2e2;">mm</span>
<svg class="a" style="left:0px;top:0px;" width="1" height="1" viewBox="0 0 1 1"><path d="M906.1999999999999 131.3l3.2 3.4l3.2 -3.4" stroke="#f0f0f0" stroke-width="1.4" fill="none" stroke-linecap="round" stroke-linejoin="round"/></svg>
<span class="t" style="left:754.00px;top:150.10px;transform:scaleX(0.9565);font-size:10.5px;line-height:15px;height:15px;color:#e2e2e2;">線種:</span>
<div class="a" style="left:788.4px;top:147.4px;width:88.20000000000005px;height:20.400000000000006px;background:#313131;border:1px solid #252525;border-radius:3px"></div>
<div class="a" style="left:793px;top:156.6px;width:67px;height:1.8px;background:#f0f0f0;"></div>
<svg class="a" style="left:0px;top:0px;" width="1" height="1" viewBox="0 0 1 1"><path d="M862.4 156.10000000000002l3.2 3.4l3.2 -3.4" stroke="#f0f0f0" stroke-width="1.4" fill="none" stroke-linecap="round" stroke-linejoin="round"/></svg>
<div class="a" style="left:880.6px;top:147.4px;width:49.19999999999993px;height:20.400000000000006px;background:#2e2e2e;border:1px solid #252525;border-radius:3px"></div>
<span class="t" style="left:885.60px;top:150.10px;transform:scaleX(0.8381);font-size:10.8px;line-height:15px;height:15px;color:#efefef;">0.00</span>
<svg class="a" style="left:0px;top:0px;" width="1" height="1" viewBox="0 0 1 1"><path d="M906.7 157.6h8.6" stroke="#6a6a6a" stroke-width="1.3" fill="none"/><path d="M919.7 157.6h8.6M924 153.29999999999998v8.6" stroke="#f0f0f0" stroke-width="1.3" fill="none"/></svg>
<span class="t" style="left:753.32px;top:179.70px;transform:scaleX(0.6837);font-size:10.5px;line-height:15px;height:15px;color:#e2e2e2;">マーカー:</span>
<div class="a" style="left:787.6px;top:172.4px;width:44.39999999999998px;height:27.400000000000006px;background:#313131;border:1px solid #252525;border-radius:3px"></div>
<div class="a" style="left:791.0px;top:186.6px;width:27px;height:1px;background:#a0a0a0;"></div>
<svg class="a" style="left:0px;top:0px;" width="1" height="1" viewBox="0 0 1 1"><path d="M818.8 185.70000000000002l3.2 3.4l3.2 -3.4" stroke="#f0f0f0" stroke-width="1.4" fill="none" stroke-linecap="round" stroke-linejoin="round"/></svg>
<div class="a" style="left:836px;top:172.4px;width:45.39999999999998px;height:27.400000000000006px;background:#313131;border:1px solid #252525;border-radius:3px"></div>
<div class="a" style="left:839.4px;top:186.6px;width:27px;height:1px;background:#a0a0a0;"></div>
<svg class="a" style="left:0px;top:0px;" width="1" height="1" viewBox="0 0 1 1"><path d="M867.1999999999999 185.70000000000002l3.2 3.4l3.2 -3.4" stroke="#f0f0f0" stroke-width="1.4" fill="none" stroke-linecap="round" stroke-linejoin="round"/></svg>
<div class="a" style="left:885.3px;top:172.4px;width:44.10000000000002px;height:27.400000000000006px;background:#313131;border:1px solid #252525;border-radius:3px"></div>
<div class="a" style="left:888.6999999999999px;top:186.6px;width:27px;height:1px;background:#a0a0a0;"></div>
<svg class="a" style="left:0px;top:0px;" width="1" height="1" viewBox="0 0 1 1"><path d="M916.4999999999999 185.70000000000002l3.2 3.4l3.2 -3.4" stroke="#f0f0f0" stroke-width="1.4" fill="none" stroke-linecap="round" stroke-linejoin="round"/></svg>
<span class="t" style="left:754.00px;top:208.50px;transform:scaleX(0.9538);font-size:10.5px;line-height:15px;height:15px;color:#e2e2e2;">角:</span>
<div class="a" style="left:788px;top:204.4px;width:21.6px;height:22.4px;background:#303030;border-radius:3px;border:1px solid #282828"></div><div class="a" style="left:814.6px;top:204.4px;width:21.6px;height:22.4px;background:#303030;border-radius:3px;border:1px solid #282828"></div><div class="a" style="left:841px;top:203.8px;width:23.4px;height:23.2px;background:#26467f;border-radius:3px;border:1px solid #26467f"></div><svg class="a" style="left:0px;top:0px;" width="1" height="1" viewBox="0 0 1 1"><path d="M791.9000000000001 222.20000000000002V213.4A6 6 0 0 1 797.9000000000001 207.4H806.5V218.4H801.8000000000001V222.20000000000002Z" fill="#f7f7f7"/><path d="M796.8000000000001 222.20000000000002V214.8A2 2 0 0 1 798.8000000000001 212.8H806.5" fill="none" stroke="#222" stroke-width="1.1" stroke-dasharray="1 1"/></svg>
<svg class="a" style="left:0px;top:0px;" width="1" height="1" viewBox="0 0 1 1"><path d="M818.1 222.20000000000002V212.0L822.7 207.4H832.6999999999999V218.4H828.0V222.20000000000002Z" fill="#f7f7f7"/><path d="M823.0 222.20000000000002V212.8H832.6999999999999" fill="none" stroke="#222" stroke-width="1.1" stroke-dasharray="1 1"/></svg>
<svg class="a" style="left:0px;top:0px;" width="1" height="1" viewBox="0 0 1 1"><path d="M844.9000000000001 222.20000000000002V207.4H859.5V218.4H854.8000000000001V222.20000000000002Z" fill="#f4f6ff"/><path d="M849.8000000000001 222.20000000000002V212.8H859.5" fill="none" stroke="#33518f" stroke-width="1.1" stroke-dasharray="1 1"/></svg>
<div class="a" style="left:867px;top:204px;width:62.39999999999998px;height:23px;background:#2e2e2e;border:1px solid #252525;border-radius:3px"></div>
<span class="t" style="left:872.00px;top:208.50px;transform:scaleX(0.8857);font-size:10.8px;line-height:15px;height:15px;color:#efefef;">4.00</span>
<svg class="a" style="left:0px;top:0px;" width="1" height="1" viewBox="0 0 1 1"><path d="M905.5 216h8.6" stroke="#f0f0f0" stroke-width="1.3" fill="none"/><path d="M917.3000000000001 216h8.6M921.6 211.7v8.6" stroke="#f0f0f0" stroke-width="1.3" fill="none"/></svg>
<span class="t" style="left:754.00px;top:235.10px;transform:scaleX(0.9538);font-size:10.5px;line-height:15px;height:15px;color:#e2e2e2;">端:</span>
<div class="a" style="left:788px;top:230.4px;width:22.4px;height:23px;background:#26467f;border-radius:3px;border:1px solid #26467f"></div><div class="a" style="left:814.6px;top:231px;width:21.6px;height:22px;background:#303030;border-radius:3px;border:1px solid #282828"></div><div class="a" style="left:841px;top:231px;width:21.6px;height:22px;background:#303030;border-radius:3px;border:1px solid #282828"></div><svg class="a" style="left:0px;top:0px;" width="1" height="1" viewBox="0 0 1 1"><path d="M793 239h11.2v10h-11.2z" fill="#f2f5ff"/><path d="M797.4 239v10" stroke="#2b4c8c" stroke-width="1.1"/><path d="M800.2 239v10" stroke="#a8b6d8" stroke-width="1"/><path d="M819.8 249v-9.200a5.600 5.600 0 0 1 11.200 0v9.200z" fill="#f7f7f7"/><path d="M825.400 239.400v9.600" stroke="#8a8a8a" stroke-width="1.300"/><path d="M824 240v9M826.800 240v9" stroke="#2a2a2a" stroke-width="0.600"/><path d="M846.600 236h11.400v13h-11.400z" fill="#f7f7f7"/><path d="M852.300 239.600v9.400" stroke="#8a8a8a" stroke-width="1.300"/><path d="M850.900 239.600v9.400M853.700 239.600v9.400" stroke="#2a2a2a" stroke-width="0.700"/></svg>
<span class="t" style="left:754.00px;top:261.10px;transform:scaleX(0.9739);font-size:10.5px;line-height:15px;height:15px;color:#e2e2e2;">順序:</span>
<div class="a" style="left:787.6px;top:256.40000000000003px;width:22.4px;height:23.2px;background:#26467f;border-radius:3px;border:1px solid #26467f"></div><svg class="a" style="left:0px;top:0px;" width="1" height="1" viewBox="0 0 1 1"><rect x="794.5" y="264.5" width="13.200" height="12.800" fill="#fbeef6"/><rect x="799.7" y="269.3" width="8" height="8" fill="#e6108c"/><circle cx="796.9" cy="266.4" r="5.700" fill="#22a4e4"/></svg>
<div class="a" style="left:814.6px;top:257.20000000000005px;width:21.6px;height:22px;background:#303030;border-radius:3px;border:1px solid #282828"></div><svg class="a" style="left:0px;top:0px;" width="1" height="1" viewBox="0 0 1 1"><rect x="821.5" y="264.5" width="13.200" height="12.800" fill="#fbeef6"/><rect x="823.9" y="267.5" width="11.400" height="9.800" fill="#e6108c"/><circle cx="823.9" cy="266.4" r="5.700" fill="#22a4e4"/></svg>
<div class="a" style="left:841px;top:257.20000000000005px;width:21.6px;height:22px;background:#303030;border-radius:3px;border:1px solid #282828"></div><svg class="a" style="left:0px;top:0px;" width="1" height="1" viewBox="0 0 1 1"><rect x="852.9" y="269.5" width="8.200" height="7.800" fill="#e6108c"/><circle cx="850.3" cy="266.4" r="5.700" fill="#22a4e4"/><path d="M849.9 277.3V266.7H861.1" fill="none" stroke="#fbeef6" stroke-width="4.200"/></svg>
<div class="a" style="left:788px;top:284.20000000000005px;width:21.6px;height:22px;background:#303030;border-radius:3px;border:1px solid #282828"></div><svg class="a" style="left:0px;top:0px;" width="1" height="1" viewBox="0 0 1 1"><circle cx="796.9" cy="293.8" r="5.700" fill="#22a4e4"/><rect x="799.5" y="296.9" width="8.200" height="7.800" fill="#e6108c"/><path d="M796.5 304.7V294.09999999999997H807.7" fill="none" stroke="#fbeef6" stroke-width="4.200"/></svg>
<div class="a" style="left:814.6px;top:284.20000000000005px;width:21.6px;height:22px;background:#303030;border-radius:3px;border:1px solid #282828"></div><svg class="a" style="left:0px;top:0px;" width="1" height="1" viewBox="0 0 1 1"><rect x="821.5" y="291.9" width="13.200" height="12.800" fill="#fbeef6"/><circle cx="823.9" cy="293.8" r="5.700" fill="#22a4e4"/><rect x="824.3" y="293.9" width="11" height="10.800" fill="#e6108c"/></svg>
<div class="a" style="left:841px;top:284.20000000000005px;width:21.6px;height:22px;background:#303030;border-radius:3px;border:1px solid #282828"></div><svg class="a" style="left:0px;top:0px;" width="1" height="1" viewBox="0 0 1 1"><circle cx="850.3" cy="293.8" r="5.700" fill="#22a4e4"/><rect x="847.9" y="291.9" width="13.200" height="12.800" fill="#fbeef6"/><rect x="850.1" y="293.29999999999995" width="11" height="11.400" fill="#e6108c"/></svg>
<div class="a" style="left:983.6px;top:421.4px;width:80px;height:20px;transform:rotate(-13.3deg);transform-origin:0 100%"><span style="position:absolute;left:0;top:0;white-space:nowrap;font-family:'Noto Sans CJK JP',sans-serif;font-weight:400;font-size:15.5px;line-height:20px;color:#f0f0f0;letter-spacing:3.6px">初期費用</span></div>
<svg class="a" style="left:0px;top:0px;" width="1" height="1" viewBox="0 0 1 1"><path d="M978.600 441.600c4 3.600 9.600 4.800 16 2c6.600-2.800 13.400-6 20.600-7.600c3.400 0.400 5.800 2.800 4.600 4.600c-1.200 1.600-3.800 0-3.400-2.200c0.400-2 3.400-3 7.800-3.800c9.400-1.600 21.400-4 29.400-8.400c7.200-4 12-9.600 14.400-15.800" stroke="#e4e4e4" stroke-width="0.900" fill="none"/></svg>
<span class="t" style="left:1016.88px;top:443.18px;transform:scale(1.1160,0.8077);font-size:27px;line-height:30px;height:30px;color:#f6f6f6;font-weight:500;font-family:'Noto Sans CJK JP','Liberation Sans',sans-serif;">ゼロ</span>
<span class="t" style="left:1080.23px;top:448.52px;transform:scale(1.1667,0.9600);font-size:17px;line-height:20px;height:20px;color:#e8e8e8;font-weight:300;font-family:'Noto Sans CJK JP','Liberation Sans',sans-serif;">から</span>
<span class="t" style="left:1029.74px;top:470.20px;transform:scale(1.1313,1.0333);font-size:17px;line-height:20px;height:20px;color:#e8e8e8;font-weight:300;font-family:'Noto Sans CJK JP','Liberation Sans',sans-serif;">はじめて</span>
<span class="t" style="left:1106.79px;top:468.91px;transform:scale(1.0062,1.0444);font-size:19.5px;line-height:22px;height:22px;color:#f6f6f6;font-weight:700;font-family:'Noto Sans CJK JP','Liberation Sans',sans-serif;">クリエイター</span>
<span class="t" style="left:1044.00px;top:496.10px;transform:scaleX(0.9333);font-size:10.6px;line-height:15px;height:15px;color:#cfcfcf;font-family:'DejaVu Sans','Liberation Sans',sans-serif;">zero kara hajimete creator</span>
<div class="a" style="left:748.6px;top:532.4px;width:496px;height:1px;background:#222;"></div>
<span class="t" style="left:1105.10px;top:540.10px;transform:scaleX(0.6960);font-size:10.5px;line-height:15px;height:15px;color:#e2e2e2;">ブレンドモード:</span>
<div class="a" style="left:1162px;top:536px;width:81.40000000000009px;height:22.200000000000045px;background:#313131;border:1px solid #252525;border-radius:3px"></div>
<span class="t" style="left:1169.80px;top:539.90px;transform:scaleX(0.9429);font-size:10.5px;line-height:15px;height:15px;color:#e2e2e2;">標準</span>
<svg class="a" style="left:0px;top:0px;" width="1" height="1" viewBox="0 0 1 1"><path d="M1229.3999999999999 546.3l3.2 3.4l3.2 -3.4" stroke="#f0f0f0" stroke-width="1.4" fill="none" stroke-linecap="round" stroke-linejoin="round"/></svg>
<div class="a" style="left:748.6px;top:561.6px;width:442px;height:16.6px;background:#272727;"></div>
<div class="a" style="left:748.6px;top:561.6px;width:1.4px;height:16.6px;background:#161616;"></div>
<span class="t" style="left:750.80px;top:562.70px;transform:scaleX(0.8041);font-size:10.5px;line-height:15px;height:15px;color:#ececec;">ぼかし (%)</span>
<span class="t" style="left:1196.20px;top:562.70px;transform:scaleX(0.9286);font-size:10.6px;line-height:15px;height:15px;color:#ececec;">0.0</span>
<svg class="a" style="left:0px;top:0px;" width="1" height="1" viewBox="0 0 1 1"><path d="M1221.7 570.2h8.6" stroke="#6a6a6a" stroke-width="1.3" fill="none"/><path d="M1232.7 570.2h8.6M1237 565.9000000000001v8.6" stroke="#f0f0f0" stroke-width="1.3" fill="none"/></svg>
<div class="a" style="left:748.6px;top:580.6px;width:442px;height:18.4px;background:#1a3a6e;"></div>
<div class="a" style="left:749.4px;top:582px;width:441px;height:16px;background:#1f58ac;"></div>
<span class="t" style="left:750.65px;top:582.70px;transform:scaleX(0.9467);font-size:10.5px;line-height:15px;height:15px;color:#eaf2ff;">不透明度 (%)</span>
<span class="t" style="left:1196.10px;top:582.70px;transform:scaleX(0.8960);font-size:10.6px;line-height:15px;height:15px;color:#ececec;">100.0</span>
<svg class="a" style="left:0px;top:0px;" width="1" height="1" viewBox="0 0 1 1"><path d="M1221.7 590.2h8.6" stroke="#f0f0f0" stroke-width="1.3" fill="none"/><path d="M1232.7 590.2h8.6M1237 585.9000000000001v8.6" stroke="#6a6a6a" stroke-width="1.3" fill="none"/></svg>
<svg class="a" style="left:1256.64px;top:75.04px;" width="14.72" height="14.72" viewBox="-8 -8 16 16"><path d="M-3.8 -5h4.6l3 3v7h-7.6z" fill="none" stroke="#ececec" stroke-width="1.6" stroke-linejoin="round"/><path d="M0.4 -4.6v3.2h3" fill="#ececec"/><circle cx="4.6" cy="-5" r="1.7" fill="#2a9038"/></svg>
<svg class="a" style="left:1256.64px;top:99.04px;" width="14.72" height="14.72" viewBox="-8 -8 16 16"><path d="M-5.2 4.6v-9h3.6l1.2 1.6h4.600v1.800" fill="none" stroke="#ececec" stroke-width="1.5" stroke-linejoin="round"/><path d="M-5.2 4.6l2-5h8.800l-2 5z" fill="#ececec"/></svg>
<svg class="a" style="left:1256.64px;top:123.24px;" width="14.72" height="14.72" viewBox="-8 -8 16 16"><path d="M-5 0.4h10v4.800h-10z" fill="#ececec"/><path d="M-3.2 3h6.400" stroke="#333" stroke-width="1"/><path d="M0 -6v4" stroke="#2a9038" stroke-width="1.8"/><path d="M-2.600 -3l2.600 3.200 2.600-3.200z" fill="#2a9038"/></svg>
<svg class="a" style="left:1256.64px;top:147.44px;" width="14.72" height="14.72" viewBox="-8 -8 16 16"><path d="M-3 -5h6v2.400h-6z" fill="#ececec"/><path d="M-5.400 -1.800h10.800v4.400h-10.800z" fill="#ececec"/><path d="M-3 1.400h6v3.800h-6z" fill="#ececec" stroke="#383838" stroke-width="0.9"/></svg>
<svg class="a" style="left:1256.64px;top:175.44px;" width="14.72" height="14.72" viewBox="-8 -8 16 16"><path d="M-1.600 -5h3.400l3 3v7h-6.400" fill="none" stroke="#ececec" stroke-width="1.600" stroke-linejoin="round"/><path d="M-6 0.400h4.400" stroke="#2a9038" stroke-width="1.500"/><path d="M-2.600 -1.800l2.600 2.200-2.600 2.200z" fill="#2a9038"/></svg>
<svg class="a" style="left:1256.64px;top:200.04px;" width="14.72" height="14.72" viewBox="-8 -8 16 16"><path d="M3.400 1.600v3.400h-7.200v-10h4.600l2.600 2.600" fill="none" stroke="#ececec" stroke-width="1.600" stroke-linejoin="round"/><path d="M0.400 0.400h4" stroke="#2a9038" stroke-width="1.500"/><path d="M3.600 -1.800l2.600 2.200-2.600 2.200z" fill="#2a9038"/></svg>
<svg class="a" style="left:1256.64px;top:227.44px;" width="14.72" height="14.72" viewBox="-8 -8 16 16"><path d="M-3 -1.400h4.200a3 3 0 0 1 0 6h-2" fill="none" stroke="#ececec" stroke-width="1.600"/><path d="M-5.600 -1.400l3.400-2.800v5.600z" fill="#ececec"/></svg>
<svg class="a" style="left:1256.64px;top:252.24px;" width="14.72" height="14.72" viewBox="-8 -8 16 16"><path d="M3 -1.400h-4.200a3 3 0 0 0 0 6h2" fill="none" stroke="#7a7a7a" stroke-width="1.500"/><path d="M5.600 -1.400l-3.400-2.800v5.600z" fill="#7a7a7a"/></svg>
<svg class="a" style="left:1256.64px;top:279.04px;" width="14.72" height="14.72" viewBox="-8 -8 16 16"><rect x="-5.200" y="-5.200" width="7" height="7" fill="#ececec"/><rect x="-1.600" y="-1.600" width="7" height="7" fill="#ececec" stroke="#383838" stroke-width="1"/></svg>
<svg class="a" style="left:1256.64px;top:304.24px;" width="14.72" height="14.72" viewBox="-8 -8 16 16"><path d="M-3.600 -5.400l5.800 8M3.600 -5.400l-5.800 8" stroke="#ececec" stroke-width="1.400" fill="none"/><circle cx="-3" cy="3.600" r="1.900" fill="none" stroke="#ececec" stroke-width="1.400"/><circle cx="3" cy="3.600" r="1.900" fill="none" stroke="#ececec" stroke-width="1.400"/></svg>
<svg class="a" style="left:1256.64px;top:329.64px;" width="14.72" height="14.72" viewBox="-8 -8 16 16"><path d="M-4.600 -3.800h9.200v9h-9.200z" fill="none" stroke="#ececec" stroke-width="1.500"/><path d="M-2 -5.400h4v2.400h-4z" fill="#ececec"/><path d="M-2.400 -1h4.800v4.400h-4.800z" fill="#cfcfcf"/></svg>
<svg class="a" style="left:1256.64px;top:355.64px;" width="14.72" height="14.72" viewBox="-8 -8 16 16"><circle cx="-0.800" cy="-0.800" r="4.100" fill="#4a4a4a" stroke="#f4f4f4" stroke-width="2"/><path d="M2.600 2.600l2.800 2.800" stroke="#f4f4f4" stroke-width="2.200" stroke-linecap="round"/><rect x="-3" y="-2.800" width="4.400" height="4" fill="#dcdcdc"/></svg>
<svg class="a" style="left:1256.64px;top:380.64px;" width="14.72" height="14.72" viewBox="-8 -8 16 16"><circle cx="-0.800" cy="-0.800" r="4.100" fill="#4a4a4a" stroke="#f4f4f4" stroke-width="2"/><path d="M2.600 2.600l2.800 2.800" stroke="#f4f4f4" stroke-width="2.200" stroke-linecap="round"/><circle cx="-0.800" cy="-0.800" r="2" fill="#dcdcdc"/></svg>
<svg class="a" style="left:1256.64px;top:405.04px;" width="14.72" height="14.72" viewBox="-8 -8 16 16"><circle cx="-0.800" cy="-0.800" r="4.100" fill="#4a4a4a" stroke="#f4f4f4" stroke-width="2"/><path d="M2.600 2.600l2.800 2.800" stroke="#f4f4f4" stroke-width="2.200" stroke-linecap="round"/><rect x="-2.400" y="-3.200" width="3.200" height="4.800" fill="#dcdcdc"/></svg>
<svg class="a" style="left:1256.64px;top:429.64px;" width="14.72" height="14.72" viewBox="-8 -8 16 16"><rect x="-3.800" y="-3.800" width="7.600" height="7.600" fill="none" stroke="#ececec" stroke-width="1.300"/><path d="M-5.600 -5.600l1.800 1.800M5.600 -5.600l-1.800 1.800M-5.600 5.600l1.800-1.800M5.600 5.600l-1.800-1.800" stroke="#ececec" stroke-width="1"/><rect x="-1" y="-1.400" width="2" height="2.800" fill="#ececec"/></svg>
<svg class="a" style="left:1256.64px;top:457.04px;" width="14.72" height="14.72" viewBox="-8 -8 16 16"><rect x="-5.200" y="-5.200" width="6.600" height="6.600" fill="#ececec"/><rect x="-1.600" y="-1.600" width="7" height="7" fill="#1fa524"/></svg>
<svg class="a" style="left:1256.64px;top:481.64px;" width="14.72" height="14.72" viewBox="-8 -8 16 16"><rect x="-5.200" y="-5.200" width="6.600" height="6.600" fill="#ececec"/><rect x="-1.400" y="-1.400" width="6.400" height="6.400" fill="#383838" stroke="#ececec" stroke-width="1.400"/><rect x="0.800" y="0.600" width="2" height="2.600" fill="#ececec"/></svg>
<svg class="a" style="left:1256.64px;top:506.64px;" width="14.72" height="14.72" viewBox="-8 -8 16 16"><rect x="-5.200" y="-5.200" width="6.600" height="6.600" fill="#ececec"/><rect x="-1.400" y="-1.400" width="6.400" height="6.400" fill="#383838" stroke="#ececec" stroke-width="1.400"/><path d="M0.400 1h3v2.400h-3z" fill="#ececec"/></svg>
<svg class="a" style="left:1256.64px;top:534.44px;" width="14.72" height="14.72" viewBox="-8 -8 16 16"><rect x="-5.400" y="-5" width="10.800" height="10" fill="none" stroke="#2a9038" stroke-width="1.100" stroke-dasharray="2.200 2"/><circle cx="-1" cy="-0.800" r="2.800" fill="#ececec"/><circle cx="1.800" cy="1" r="2.600" fill="#cfcfcf" stroke="#383838" stroke-width="0.600"/></svg>
<svg class="a" style="left:1256.64px;top:558.24px;" width="14.72" height="14.72" viewBox="-8 -8 16 16"><circle cx="0" cy="0" r="2.800" fill="#ececec"/><path d="M-5 -5l2 2M5 -5l-2 2M-5 5l2-2M5 5l-2-2" stroke="#ececec" stroke-width="1.500" stroke-dasharray="1.600 1"/></svg>
<div class="a" style="left:1253.6px;top:579.8px;width:21.600000000000136px;height:21.0px;background:#353535;border:1px solid #262626;border-radius:3px"></div>
<svg class="a" style="left:0px;top:0px;" width="1" height="1" viewBox="0 0 1 1"><path d="M1261.0 589.6999999999999l3.2 3.4l3.2 -3.4" stroke="#f0f0f0" stroke-width="1.4" fill="none" stroke-linecap="round" stroke-linejoin="round"/></svg>
<div class="a" style="left:0.6px;top:607px;width:43.6px;height:43.8px;background:#ffffff;"></div>
<svg class="a" style="left:0px;top:0px;" width="1" height="1" viewBox="0 0 1 1"><path d="M4 610.4l36.800 36.800M40.800 610.400l-36.800 36.800" stroke="#b3123f" stroke-width="2.800" stroke-linecap="round" fill="none"/></svg>
<div class="a" style="left:44.6px;top:607.4px;width:87.6px;height:43.2px;background:#000;"></div>
<div class="a" style="left:88.2px;top:607.4px;width:0.8px;height:43.2px;background:#2a2a2a;"></div>
<div class="a" style="left:132.6px;top:628.6px;width:21.80000000000001px;height:22.2px;background:#1a76f2;"></div>
<div class="a" style="left:154.4px;top:628.6px;width:22.0px;height:22.2px;background:#21b1ba;"></div>
<div class="a" style="left:176.4px;top:628.6px;width:22.0px;height:22.2px;background:#1f0a5c;"></div>
<div class="a" style="left:198.8px;top:628.6px;width:21.599999999999994px;height:22.2px;background:#da5a44;"></div>
<div class="a" style="left:220.4px;top:628.6px;width:22.19999999999999px;height:22.2px;background:#d42148;"></div>
<div class="a" style="left:242.6px;top:628.6px;width:21.599999999999994px;height:22.2px;background:#ebf3fb;"></div>
<svg class="a" style="left:0px;top:0px;" width="1" height="1" viewBox="0 0 1 1"><circle cx="187.400" cy="639.800" r="6.200" fill="none" stroke="#c79cf2" stroke-width="1.500"/><circle cx="253.400" cy="639.800" r="3.100" fill="#9aa0a4"/></svg>
<span class="t" style="left:14.72px;top:652.70px;transform:scaleX(0.6813);font-size:10.5px;line-height:15px;height:15px;color:#e2e2e2;">フィル:</span>
<span class="t" style="left:-0.28px;top:666.30px;transform:scaleX(0.6815);font-size:10.5px;line-height:15px;height:15px;color:#e2e2e2;">ストローク:</span>
<div class="a" style="left:50.8px;top:652.2px;width:33.4px;height:13.4px;background:#ebf3fb;"></div>
<div class="a" style="left:50.8px;top:665.6px;width:33.4px;height:14px;background:#1f0a5c;"></div>
<span class="t" style="left:92.60px;top:666.50px;transform:scaleX(0.8800);font-size:10.6px;line-height:15px;height:15px;color:#e8e8e8;">3.00</span>
<span class="t" style="left:117.00px;top:658.90px;transform:scaleX(0.8600);font-size:10.6px;line-height:15px;height:15px;color:#e2e2e2;">O:</span>
<div class="a" style="left:130.6px;top:653.4px;width:47.400000000000006px;height:28.600000000000023px;background:#333;border:1px solid #2a2a2a;border-radius:3px"></div>
<span class="t" style="left:135.11px;top:658.90px;transform:scaleX(0.8875);font-size:10.6px;line-height:15px;height:15px;color:#efefef;">100</span>
<svg class="a" style="left:0px;top:0px;" width="1" height="1" viewBox="0 0 1 1"><path d="M158.79999999999998 666.4h7.6" stroke="#f0f0f0" stroke-width="1.3" fill="none"/><path d="M168.2 666.4h7.6M172 662.6v7.6" stroke="#6a6a6a" stroke-width="1.3" fill="none"/></svg>
<div class="a" style="left:185px;top:657px;width:3.4px;height:15.6px;background:#3f6fd0;border-radius:1.5px"></div>
<span class="t" style="left:191.12px;top:658.90px;transform:scaleX(0.8824);font-size:10.6px;line-height:15px;height:15px;color:#e2e2e2;">Layer 1</span>
<svg class="a" style="left:233.20px;top:658.80px;" width="16.00" height="16.00" viewBox="-8 -8 16 16"><ellipse cx="0" cy="0.800" rx="4.400" ry="3.200" fill="none" stroke="#ececec" stroke-width="1.500"/><circle cx="0" cy="1" r="1.300" fill="#ececec"/><path d="M-2.600 -4.200l0.800 2M2.600 -4.200l-0.800 2M0 -4.800v2.200" stroke="#ececec" stroke-width="1.100"/></svg>
<svg class="a" style="left:258.20px;top:658.60px;" width="16.00" height="16.00" viewBox="-8 -8 16 16"><path d="M0.400 -0.400v-2a2.100 2.100 0 0 1 4.200 0v1" stroke="#ececec" stroke-width="1.300" fill="none"/><rect x="-4.400" y="-0.800" width="7" height="5.600" rx="0.600" fill="#ececec"/></svg>
<span class="t" style="left:283.00px;top:659.10px;transform:scaleX(0.9174);font-size:10.5px;line-height:15px;height:15px;color:#e2e2e2;">移動 0.00 mm, 14.03 mm。</span>
<span class="t" style="left:398.60px;top:659.10px;transform:scaleX(0.8722);font-size:10.5px;line-height:15px;height:15px;color:#ececec;font-weight:700;">Ctrl</span>
<span class="t" style="left:415.86px;top:659.10px;transform:scaleX(0.9382);font-size:10.5px;line-height:15px;height:15px;color:#e2e2e2;">で水平/垂直方向に制限、</span>
<span class="t" style="left:523.60px;top:659.10px;transform:scaleX(0.9043);font-size:10.5px;line-height:15px;height:15px;color:#ececec;font-weight:700;">Shift</span>
<span class="t" style="left:546.64px;top:659.10px;transform:scaleX(0.7621);font-size:10.5px;line-height:15px;height:15px;color:#e2e2e2;">でスナップを無効化します</span>
<span class="t" style="left:1064.40px;top:652.50px;transform:scaleX(0.9111);font-size:10.6px;line-height:15px;height:15px;color:#e2e2e2;">X:</span>
<span class="t" style="left:1064.40px;top:666.70px;transform:scaleX(0.9111);font-size:10.6px;line-height:15px;height:15px;color:#e2e2e2;">Y:</span>
<span class="t" style="left:1087.80px;top:652.50px;transform:scaleX(0.8692);font-size:10.6px;line-height:15px;height:15px;color:#e8e8e8;">98.60</span>
<span class="t" style="left:1082.12px;top:666.70px;transform:scaleX(0.8839);font-size:10.6px;line-height:15px;height:15px;color:#e8e8e8;">129.46</span>
<span class="t" style="left:1118.80px;top:658.90px;transform:scaleX(0.8667);font-size:10.6px;line-height:15px;height:15px;color:#e2e2e2;">Z:</span>
<div class="a" style="left:1129.6px;top:652.6px;width:60.0px;height:29.399999999999977px;background:#333;border:1px solid #2a2a2a;border-radius:3px"></div>
<span class="t" style="left:1140.00px;top:658.90px;transform:scaleX(0.9143);font-size:10.6px;line-height:15px;height:15px;color:#efefef;">66%</span>
<svg class="a" style="left:0px;top:0px;" width="1" height="1" viewBox="0 0 1 1"><path d="M1168.4 666.4h8" stroke="#f0f0f0" stroke-width="1.3" fill="none"/><path d="M1180.0 666.4h8M1184 662.4v8" stroke="#f0f0f0" stroke-width="1.3" fill="none"/></svg>
<span class="t" style="left:1195.71px;top:658.90px;transform:scaleX(0.8889);font-size:10.6px;line-height:15px;height:15px;color:#e2e2e2;">R:</span>
<div class="a" style="left:1207.6px;top:652.6px;width:66.0px;height:29.399999999999977px;background:#333;border:1px solid #2a2a2a;border-radius:3px"></div>
<span class="t" style="left:1220.60px;top:658.90px;transform:scaleX(0.9333);font-size:10.6px;line-height:15px;height:15px;color:#efefef;">0.00°</span>
<svg class="a" style="left:0px;top:0px;" width="1" height="1" viewBox="0 0 1 1"><path d="M1252.0 666.4h8" stroke="#f0f0f0" stroke-width="1.3" fill="none"/><path d="M1263.6 666.4h8M1267.6 662.4v8" stroke="#f0f0f0" stroke-width="1.3" fill="none"/></svg>
<svg class="a" style="left:0px;top:0px;" width="1" height="1" viewBox="0 0 1 1"><path d="M1254.6 620.3000000000001l3.4 -3.4l3.4 3.4" stroke="#8a8a8a" stroke-width="1.3" fill="none" stroke-linecap="round" stroke-linejoin="round"/></svg>
<svg class="a" style="left:0px;top:0px;" width="1" height="1" viewBox="0 0 1 1"><path d="M1254.6 637.6999999999999l3.4 3.4l3.4 -3.4" stroke="#8a8a8a" stroke-width="1.3" fill="none" stroke-linecap="round" stroke-linejoin="round"/></svg>
<svg class="a" style="left:0px;top:0px;" width="1" height="1" viewBox="0 0 1 1"><path d="M1268 638.600h10M1268 642h10M1268 645.400h10" stroke="#f0f0f0" stroke-width="1.700" fill="none"/></svg>
<div class="a" style="left:-20px;top:679.4px;width:1320px;height:1.9px;background:#d4d8b6;"></div>
<div class="a" style="left:-20px;top:681.3px;width:1320px;height:60px;background:#000;"></div>
</div>
</body></html>
